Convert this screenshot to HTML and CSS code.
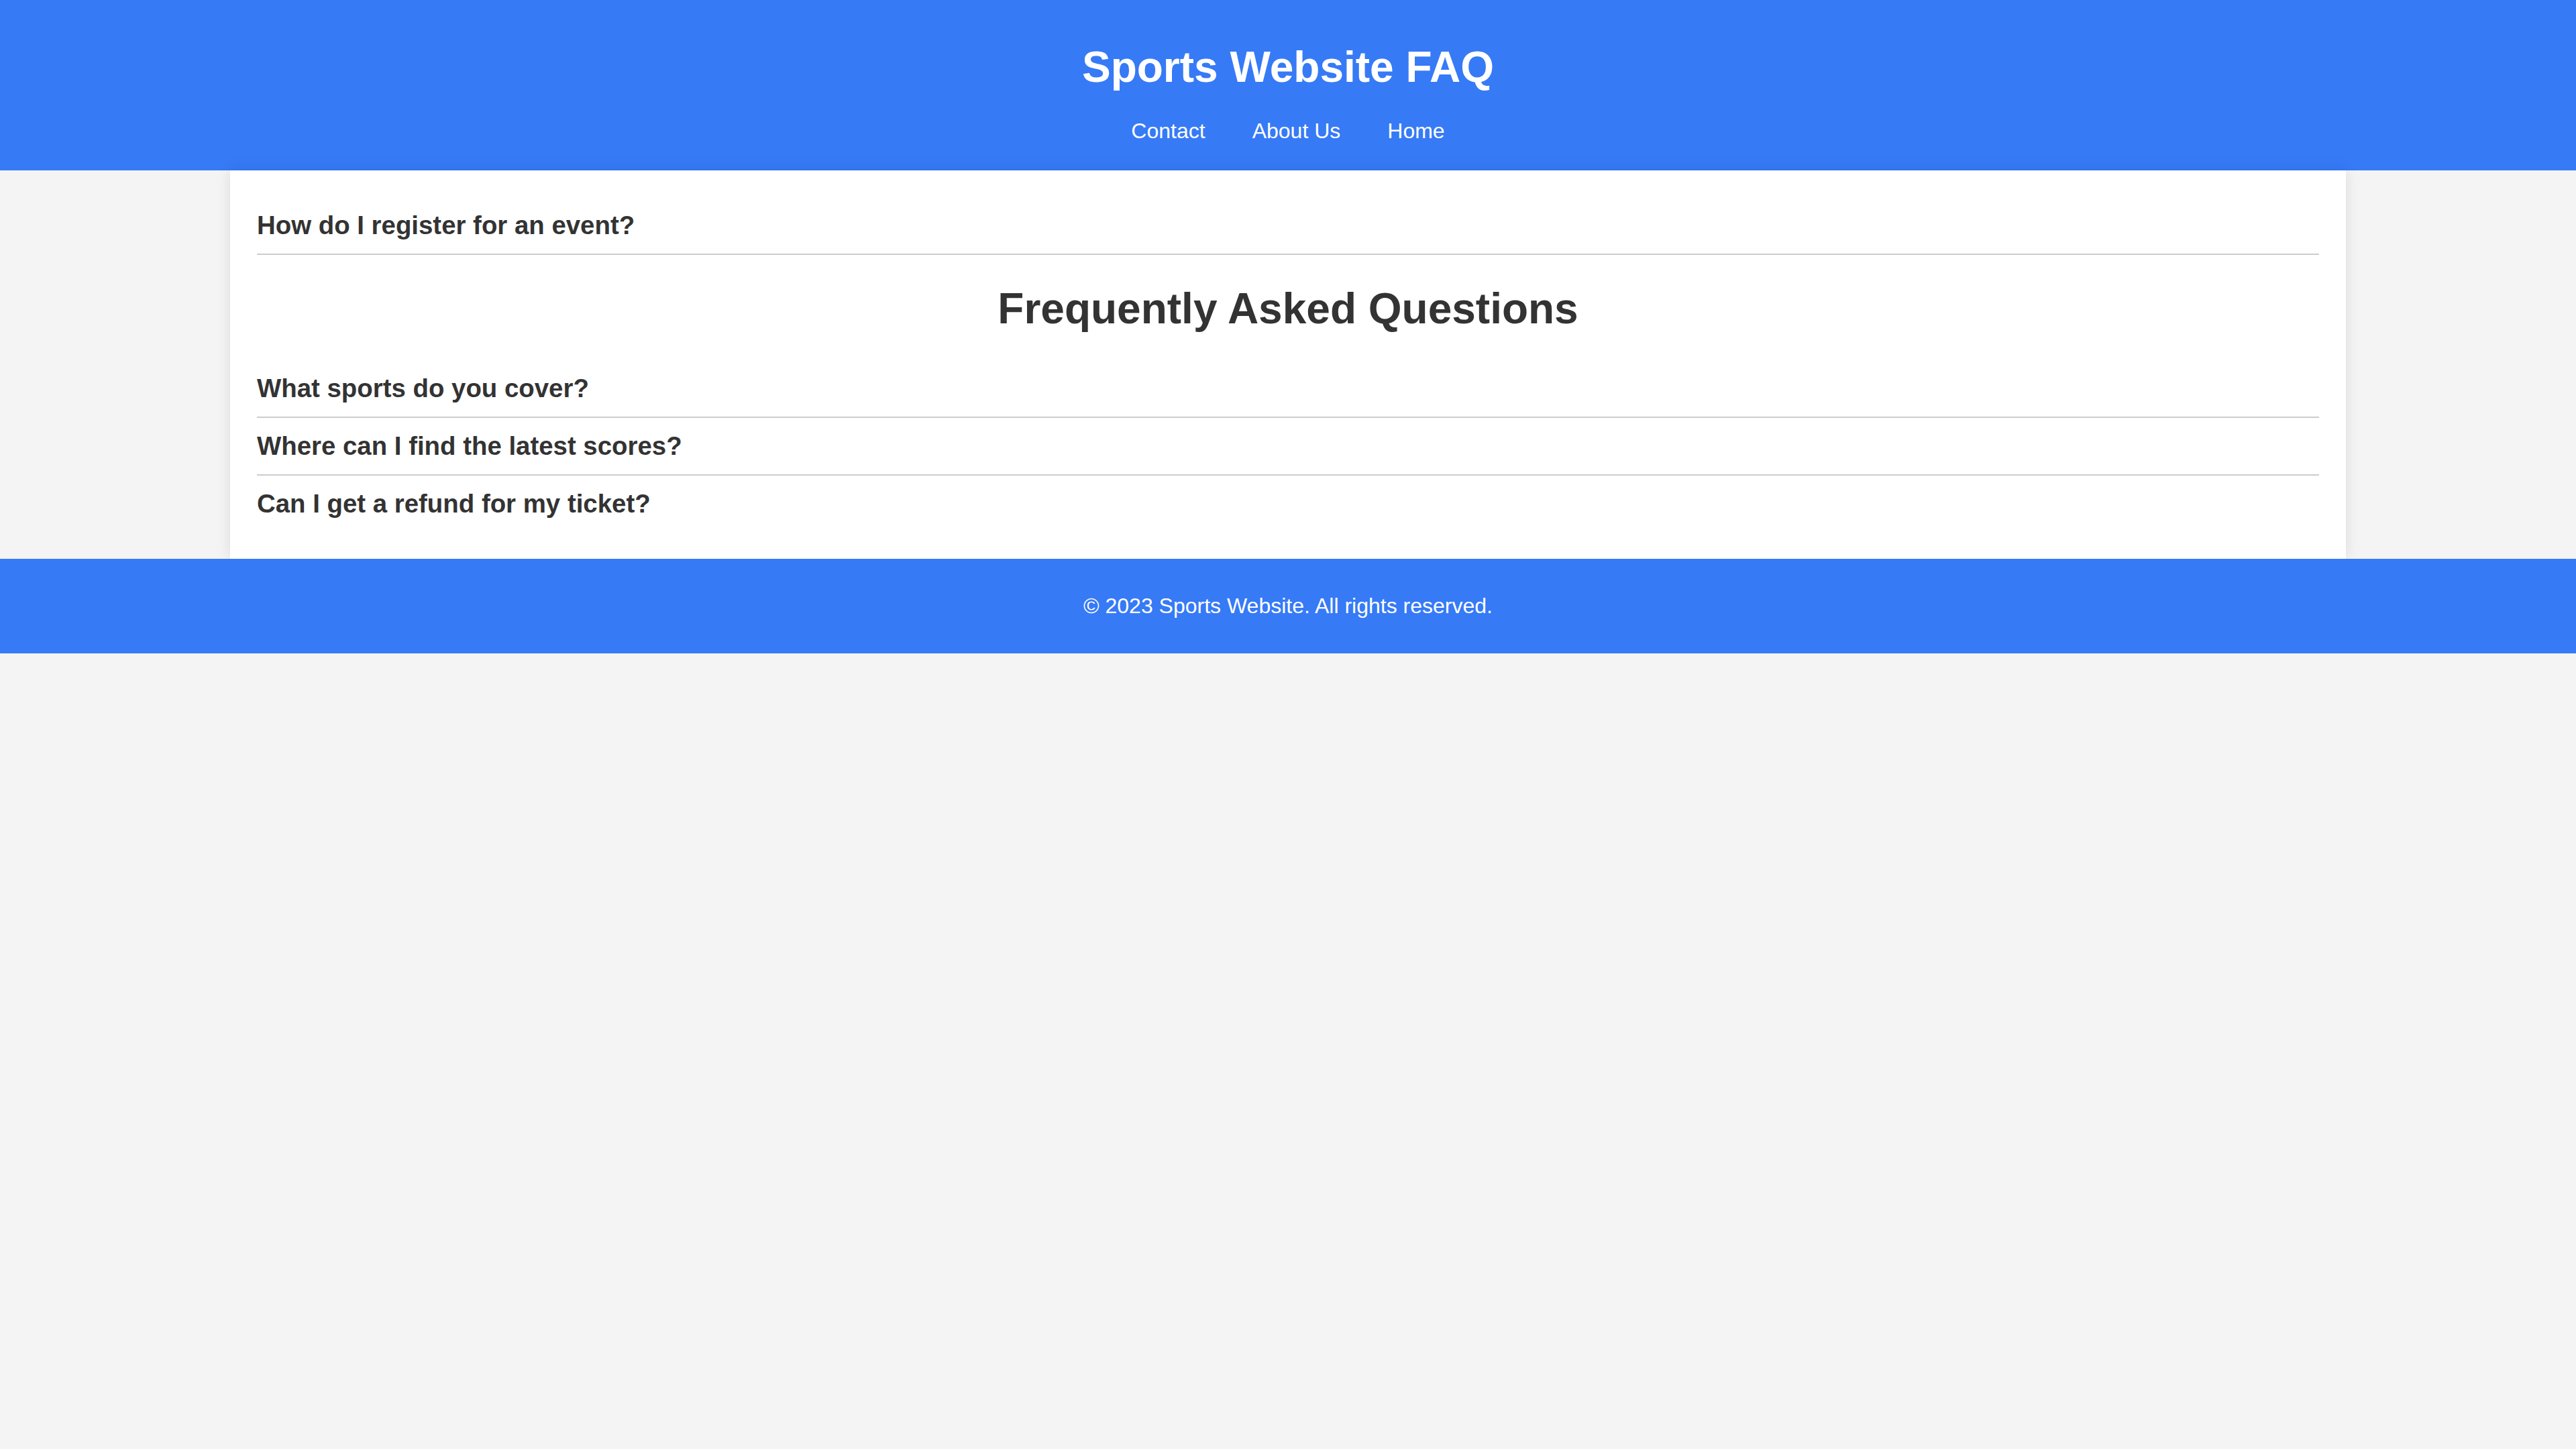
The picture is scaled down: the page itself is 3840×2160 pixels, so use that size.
FILE: index.html
```html
<!DOCTYPE html>
<html lang="en">
<head>
<meta charset="utf-8">
<title>Sports Website FAQ</title>
<link rel="stylesheet" href="styles.css">
</head>
<body>
<header class="site-header">
  <h1 class="site-title">Sports Website FAQ</h1>
  <nav class="site-nav">
    <a href="#" class="nav-link">Contact</a>
    <a href="#" class="nav-link">About Us</a>
    <a href="#" class="nav-link">Home</a>
  </nav>
</header>
<main class="faq-container">
  <div class="faq-item">
    <h3 class="faq-question">How do I register for an event?</h3>
  </div>
  <h2 class="faq-heading">Frequently Asked Questions</h2>
  <div class="faq-item">
    <h3 class="faq-question">What sports do you cover?</h3>
  </div>
  <div class="faq-item">
    <h3 class="faq-question">Where can I find the latest scores?</h3>
  </div>
  <div class="faq-item faq-item-last">
    <h3 class="faq-question">Can I get a refund for my ticket?</h3>
  </div>
</main>
<footer class="site-footer">
  <p class="footer-text">&copy; 2023 Sports Website. All rights reserved.</p>
</footer>
</body>
</html>
```

FILE: styles.css
```css
html, body {
  margin: 0;
  padding: 0;
}

body {
  background: #f4f4f4;
  color: #333333;
  font-family: "Liberation Sans", Arial, sans-serif;
  font-size: 32px;
  line-height: normal;
}

.site-header {
  background: #367af6;
  color: #ffffff;
  text-align: center;
  padding: 40px 0 40px;
}

.site-title {
  margin: 23px 0 40px;
  font-size: 64px;
  font-weight: bold;
}

.site-nav {
  display: flex;
  justify-content: center;
  gap: 70px;
}

.nav-link {
  color: #ffffff;
  text-decoration: none;
  font-size: 32px;
}

.faq-container {
  width: 3154px;
  box-sizing: border-box;
  margin: 0 auto;
  padding: 40px;
  background: #ffffff;
  box-shadow: 0 0 20px rgba(0, 0, 0, 0.1);
}

.faq-item {
  padding: 20px 0;
  border-bottom: 2px solid #cccccc;
}

.faq-item-last {
  border-bottom: none;
}

.faq-question {
  margin: 0;
  font-size: 38.4px;
  font-weight: bold;
}

.faq-heading {
  margin: 43px 0 40px;
  text-align: center;
  font-size: 64px;
  font-weight: bold;
}

.site-footer {
  background: #367af6;
  color: #ffffff;
  text-align: center;
  padding: 52px 0;
}

.footer-text {
  margin: 0;
  font-size: 32px;
}
```
